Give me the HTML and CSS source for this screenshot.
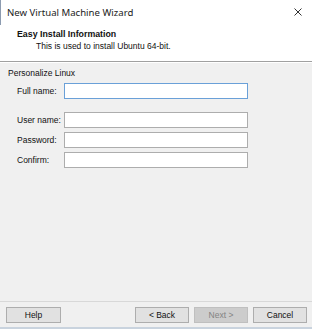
FILE: index.html
```html
<!DOCTYPE html>
<html lang="en">
<head>
    <meta charset="UTF-8">
    <title>New Virtual Machine Wizard</title>
    <link rel="stylesheet" href="styles.css">
</head>
<body>
    <div class="window">
        <div class="titlebar">
            <span class="title">New Virtual Machine Wizard</span>
            <svg class="close" width="8" height="8" viewBox="0 0 8 8">
                <path d="M0.5 0.5 L7.5 7.5 M7.5 0.5 L0.5 7.5" stroke="#333" stroke-width="1" fill="none"/>
            </svg>
        </div>

        <div class="header">
            <div class="heading">Easy Install Information</div>
            <div class="subheading">This is used to install Ubuntu 64-bit.</div>
        </div>

        <div class="content">
            <div class="group-title">Personalize Linux</div>

            <div class="row">
                <label>Full name:</label>
                <input type="text" class="field focused">
            </div>

            <div class="fields">
                <div class="row">
                    <label>User name:</label>
                    <input type="text" class="field">
                </div>
                <div class="row">
                    <label>Password:</label>
                    <input type="password" class="field">
                </div>
                <div class="row">
                    <label>Confirm:</label>
                    <input type="password" class="field">
                </div>
            </div>
        </div>

        <div class="footer">
            <button class="button help">Help</button>
            <div class="nav">
                <button class="button">&lt; Back</button>
                <button class="button" disabled>Next &gt;</button>
                <button class="button">Cancel</button>
            </div>
        </div>
    </div>
</body>
</html>
```

FILE: styles.css
```css
* {
    margin: 0;
    padding: 0;
    box-sizing: border-box;
}

body {
    font-family: Tahoma, "Liberation Sans", "Noto Sans", sans-serif;
    font-size: 8.5px;
    color: #111;
    background: #fff;
    width: 315px;
    height: 334px;
    overflow: hidden;
}

.window {
    display: flex;
    flex-direction: column;
    height: 329px;
}

.titlebar {
    height: 25px;
    display: flex;
    align-items: center;
    justify-content: space-between;
    padding: 0 13px 0 6px;
    border-left: 1px solid #8c9bb0;
    background: #fff;
}

.title {
    font-family: "Noto Sans", "Open Sans", sans-serif;
    font-size: 9.6px;
    color: #222;
}

.close {
    display: block;
    margin-bottom: 2px;
}

.header {
    height: 37px;
    padding: 3px 0 0 17px;
    background: #fff;
    border-bottom: 1px solid #a0a0a0;
    width: 312px;
}

.heading {
    font-weight: bold;
    font-size: 8.8px;
    line-height: 12px;
}

.subheading {
    padding-left: 19px;
    line-height: 12px;
}

.content {
    flex: 1;
    width: 312px;
    background: #f0f0f0;
    border-top: 1px solid #fff;
    padding: 4px 0 0 8px;
}

.group-title {
    line-height: 12px;
    margin-bottom: 4px;
}

.row {
    display: flex;
    align-items: center;
    height: 16px;
}

.row label {
    flex: 0 0 56px;
    padding-left: 9px;
    white-space: nowrap;
}

.fields {
    display: flex;
    flex-direction: column;
    gap: 4px;
    margin-top: 13px;
}

.field {
    width: 184px;
    height: 16px;
    border: 1px solid #adadad;
    background: #fff;
    outline: none;
}

.field.focused {
    border-color: #6aa0d8;
}

.footer {
    height: 28px;
    width: 312px;
    background: #f0f0f0;
    border-top: 1px solid #d8d8d8;
    border-bottom: 2px solid #c9d3de;
    display: flex;
    justify-content: space-between;
    align-items: flex-start;
    padding: 5px 5px 0 6px;
}

.nav {
    display: flex;
    gap: 5px;
}

.button {
    width: 54px;
    height: 16px;
    font-family: inherit;
    font-size: 8.5px;
    color: #111;
    background: #e1e1e1;
    border: 1px solid #adadad;
}

.button.help {
    width: 55px;
}

.button:disabled {
    color: #838383;
    background: #cccccc;
    border-color: #bfbfbf;
}
```
